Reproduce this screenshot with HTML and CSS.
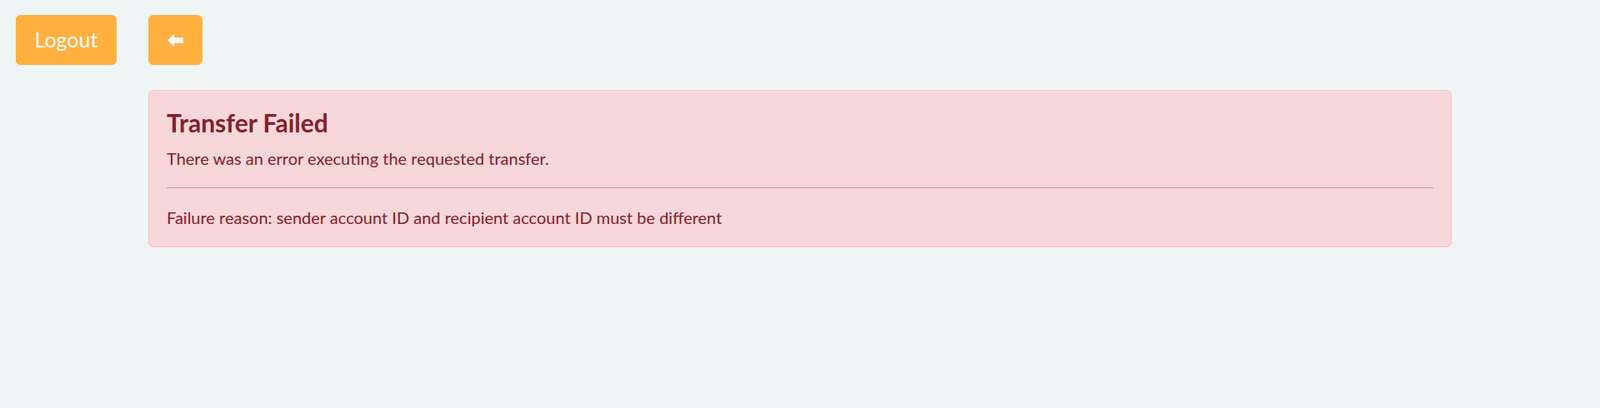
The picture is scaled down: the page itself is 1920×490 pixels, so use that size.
FILE: index.html
```html
<!DOCTYPE html>
<html lang="en">
<head>
<meta charset="utf-8">
<title>Transfer Failed</title>
<link rel="stylesheet" href="styles.css">
</head>
<body>
<div class="toolbar">
  <button class="btn btn-logout">Logout</button>
  <button class="btn btn-icon" aria-label="Back">
    <svg width="19" height="17" viewBox="0 0 19 17" aria-hidden="true"><path d="M0 8.5 L8 0.5 L8 5 L19 5 L19 12 L8 12 L8 16.5 Z" fill="#f1f6f6"/></svg>
  </button>
</div>
<div class="content">
  <div class="alert">
    <h4 class="alert-heading">Transfer Failed</h4>
    <p>There was an error executing the requested transfer.</p>
    <hr>
    <p class="last">Failure reason: sender account ID and recipient account ID must be different</p>
  </div>
</div>
</body>
</html>
```

FILE: styles.css
```css
html, body {
  margin: 0;
  padding: 0;
}
body {
  background: #eff5f5;
  font-family: "Lato", "Liberation Sans", sans-serif;
  font-size: 20px;
  line-height: 1.5;
  color: #212529;
}
.toolbar {
  display: flex;
  gap: 38px;
  padding: 18px 0 0 19px;
}
.btn {
  background: #ffb03f;
  border: 1px solid #ffb03f;
  color: #fff;
  font-family: inherit;
  font-size: 25px;
  line-height: 37.5px;
  padding: 10px 20px;
  border-radius: 6px;
  height: 60px;
  box-sizing: border-box;
  display: flex;
  align-items: center;
  justify-content: center;
  cursor: pointer;
}
.btn-logout {
  width: 121px;
}
.btn-icon {
  width: 65px;
  padding: 0;
}
.content {
  padding: 30px 178px 0 178px;
}
.alert {
  background: #f8d7da;
  border: 1px solid #f5c2c7;
  border-radius: 6px;
  color: #842029;
  padding: 20px 21px;
  height: 189px;
  box-sizing: border-box;
}
.alert-heading {
  margin: 0 0 10px 0;
  font-size: 30px;
  line-height: 36px;
  font-weight: 700;
  color: #842029;
}
.alert p {
  margin: 0 0 20px 0;
  font-size: 20px;
  line-height: 30px;
}
.alert p.last {
  margin: 0;
}
.alert hr {
  margin: 0 0 20px 0;
  border: 0;
  border-top: 1px solid #d69aa0;
  height: 0;
}
```
